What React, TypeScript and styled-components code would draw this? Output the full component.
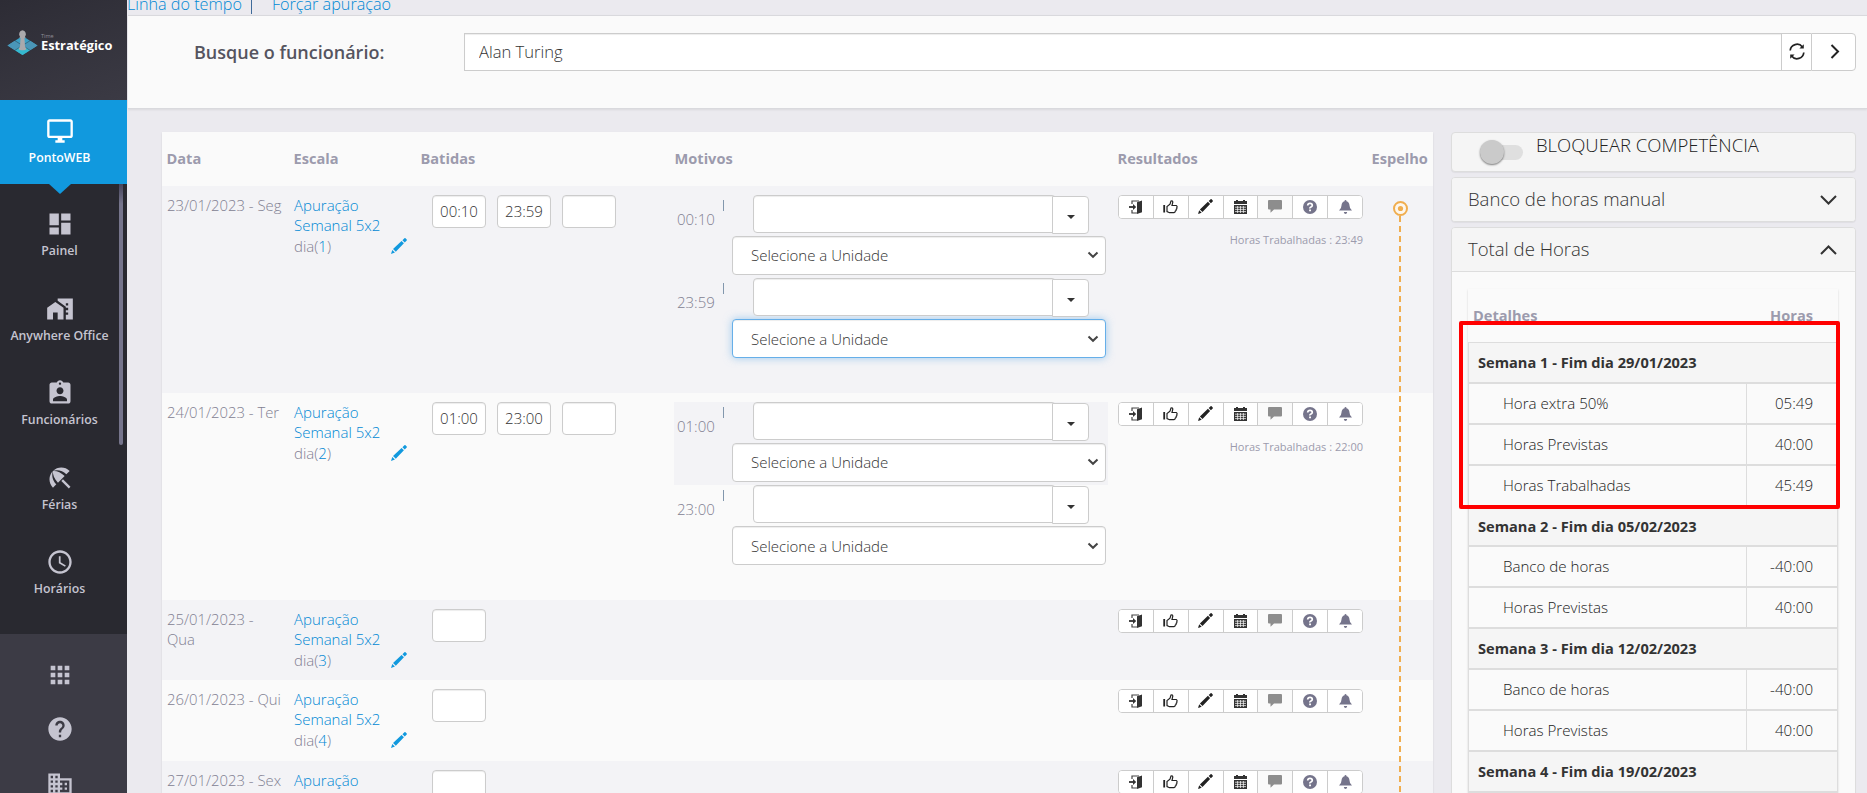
import React from 'react'

import type { IconType } from 'react-icons'
import {
  MdAccessTime,
  MdApps,
  MdAssignmentInd,
  MdBeachAccess,
  MdDashboard,
  MdDomain,
  MdHelp,
  MdHomeWork,
  MdOutlineDesktopWindows,
} from 'react-icons/md'
import styled, { createGlobalStyle, css } from 'styled-components'

const GlobalStyle = createGlobalStyle`
  *, *::before, *::after {
    box-sizing: border-box;
  }

  body {
    margin: 0;
    overflow: hidden;
    background: #ebeaef;
    color: #222;
    font-family: 'Open Sans', 'Liberation Sans', sans-serif;
    font-size: 15px;
    font-weight: 300;
    line-height: 20px;
  }

  input, button {
    font: inherit;
    color: inherit;
  }
`

const colors = {
  primary: '#1199de',
  link: '#0088d4',
  muted: '#9c9bad',
  mutedLight: '#828192',
  border: '#ccc',
  lightBorder: '#ddd',
  stripe: '#f3f3f6',
  surface: '#fafafa',
  accent: '#f0ad4e',
}

const Page = styled.div`
  display: grid;
  grid-template-columns: 127px 1fr;
  height: 793px;
  overflow: hidden;
`

/* ---------- Sidebar ---------- */

const SidebarContainer = styled.aside`
  display: grid;
  grid-template-rows: 100px 84px 450px 1fr;
  min-height: 0;
  overflow: hidden;
  background: #292930;
`

const LogoArea = styled.div`
  display: flex;
  align-items: flex-start;
  padding: 30px 0 0 7px;
  background: linear-gradient(160deg, #2d2c35, #3b3a44);
`

const LogoText = styled.div`
  display: flex;
  flex-direction: column;
  margin: 4px 0 0 3px;
  color: #fff;
  font-size: 12.8px;
  font-weight: 700;
  line-height: 13px;
`

const LogoSmallText = styled.span`
  color: #8f8e98;
  font-size: 5.5px;
  font-weight: 400;
  line-height: 5px;
`

const MenuItem = styled.a`
  display: flex;
  flex: none;
  flex-direction: column;
  align-items: center;
  height: 84.4px;
  padding: 26.4px 8px 0 0;
  color: #c5c4d0;
  font-size: 12.3px;
  font-weight: 600;
  line-height: 18px;
  white-space: nowrap;

  & > svg {
    display: block;
    margin-bottom: 4px;
  }
`

const ActiveMenuItem = styled(MenuItem)`
  position: relative;
  height: 84px;
  padding-top: 17px;
  background: ${colors.primary};
  color: #fff;

  &::after {
    position: absolute;
    top: 100%;
    left: 49px;
    border: 11px solid transparent;
    border-top: 10px solid ${colors.primary};
    border-bottom: 0;
    content: '';
  }
`

const Menu = styled.nav`
  display: flex;
  justify-content: space-between;
  min-height: 0;
  overflow: hidden;
`

const MenuList = styled.div`
  display: flex;
  flex: 1;
  flex-direction: column;
`

const MenuScrollbar = styled.div`
  width: 4px;
  height: 261px;
  margin-right: 4px;
  margin-left: -8px;
  border-radius: 0 0 2px 2px;
  background: linear-gradient(#45445a, #76758c 20px);
`

const BottomMenu = styled.div`
  display: flex;
  flex-direction: column;
  align-items: center;
  gap: 26.5px;
  padding: 26.5px 8px 0 0;
  background: #3c3b45;
  color: #c5c4d0;

  & > svg {
    flex: none;
  }
`

/* ---------- Search bar ---------- */

const Main = styled.main`
  display: flex;
  flex-direction: column;
  min-width: 0;
`

const QuickLinks = styled.div`
  height: 15px;
  overflow: hidden;
  color: ${colors.link};
  font-size: 16.2px;
  line-height: 22px;
  white-space: nowrap;
`

const QuickLinksInner = styled.div`
  display: flex;
  margin-top: -7px;
`

const LinkDivider = styled.span`
  width: 1px;
  height: 22px;
  margin: -1px 20px 0 9px;
  background: #3f6b9a;
`

const SearchBar = styled.section`
  display: grid;
  grid-template-columns: 270px 1fr;
  height: 94px;
  margin-left: 1px;
  padding: 17px 11px 0 66px;
  border-top: 1px solid #d9d9dd;
  border-bottom: 1px solid #d9d9dd;
  background: ${colors.surface};
  box-shadow: 0 1px 2px rgba(0, 0, 0, 0.08);
`

const SearchLabel = styled.label`
  color: #55545f;
  font-size: 18px;
  font-weight: 600;
  line-height: 38px;
`

const SearchGroup = styled.div`
  display: flex;
  height: 38px;
`

const SearchInput = styled.input`
  flex: 1;
  min-width: 0;
  padding: 0 14px;
  border: 1px solid ${colors.border};
  border-right: 0;
  background: #fff;
  box-shadow: inset 0 1px 1px rgba(0, 0, 0, 0.075);
  color: #333;
  font-size: 16.6px;
`

const SearchButton = styled.button<{ $width: number; $last?: boolean }>`
  display: flex;
  align-items: center;
  justify-content: center;
  width: ${(props) => props.$width}px;
  padding: ${(props) => (props.$last ? '0 0 2px 2px' : '0 0 2px')};
  border: 1px solid ${colors.border};
  border-right-width: ${(props) => (props.$last ? 1 : 0)}px;
  border-radius: ${(props) => (props.$last ? '0 4px 4px 0' : '0')};
  background: #fff;
`

/* ---------- Time sheet ---------- */

const Content = styled.div`
  display: grid;
  grid-template-columns: 1271px 405px;
  column-gap: 18px;
  align-items: start;
  padding: 23px 11px 0 35px;
`

const TimeSheetCard = styled.section`
  position: relative;
  background: ${colors.surface};
  box-shadow: 0 1px 2px rgba(0, 0, 0, 0.1);
`

const sheetColumns = css`
  display: grid;
  grid-template-columns: 127px 127px 254px 443px 254px 66px;
`

const SheetHeader = styled.div`
  ${sheetColumns};
  height: 54px;
  padding-top: 16px;
  color: ${colors.muted};
  font-size: 14.6px;
  font-weight: 700;

  & > span {
    padding-left: 4.5px;
  }
`

const SheetRow = styled.div<{ $height: number; $striped: boolean }>`
  ${sheetColumns};
  height: ${(props) => props.$height}px;
  background: ${(props) => (props.$striped ? colors.stripe : colors.surface)};
  color: ${colors.mutedLight};
`

const Cell = styled.div`
  padding: 9px 5px 0;
`

const DateCell = styled(Cell)`
  font-size: 14.85px;
`

const ScheduleLink = styled.a`
  display: block;
  color: ${colors.link};
`

const ScheduleDay = styled.div`
  display: flex;
  align-items: center;
  justify-content: space-between;
  padding: 1px 4px 0 0;

  & > span > b {
    color: ${colors.link};
    font-weight: 300;
  }
`

const PunchList = styled(Cell)`
  display: flex;
  gap: 11px;
  align-items: flex-start;
  padding-left: 16px;
`

const PunchInput = styled.input`
  width: 54px;
  height: 33px;
  padding: 0 0 1px;
  border: 1px solid ${colors.border};
  border-radius: 4px;
  background: #fff;
  box-shadow: inset 0 1px 1px rgba(0, 0, 0, 0.075);
  color: #333;
  text-align: center;
`

const ReasonList = styled(Cell)`
  padding-left: 4px;
`

const Reason = styled.div<{ $striped: boolean }>`
  display: grid;
  grid-template-columns: 58px 374px;
  height: 83.2px;
  background: ${(props) => (props.$striped ? colors.stripe : 'transparent')};
`

const ReasonTime = styled.div`
  display: flex;
  justify-content: space-between;
  padding: 14px 8px 0 3px;
`

const ReasonTick = styled.i`
  width: 1px;
  height: 11px;
  margin-top: -9px;
  background: #8297ad;
`

const Combo = styled.div`
  display: flex;
  padding-left: 21px;
`

const ComboInput = styled.input`
  width: 303px;
  height: 38px;
  border: 1px solid ${colors.border};
  border-radius: 4px;
  background: #fff;
  box-shadow: inset 0 1px 1px rgba(0, 0, 0, 0.075);
`

const ComboButton = styled.button`
  z-index: 1;
  display: flex;
  align-items: center;
  justify-content: center;
  width: 37px;
  height: 38px;
  margin: 1px 0 0 -4px;
  padding: 3px 0 0;
  border: 1px solid ${colors.border};
  border-radius: 0 4px 4px 0;
  background: #fff;
`

const UnitSelect = styled.button<{ $focused: boolean }>`
  display: flex;
  align-items: center;
  justify-content: space-between;
  width: 374px;
  height: 38.4px;
  margin-top: 2.3px;
  padding: 0 6px 0 18px;
  border: 1px solid ${(props) => (props.$focused ? '#66afe9' : colors.border)};
  border-radius: 4px;
  background: #fff;
  box-shadow: inset 0 1px 1px rgba(0, 0, 0, 0.075)
    ${(props) => props.$focused && ', 0 0 8px rgba(102, 175, 233, 0.6)'};
  color: #333;
`

const ActionGroup = styled.div`
  display: flex;
  width: 245px;
  height: 24px;
  overflow: hidden;
  border: 1px solid ${colors.border};
  border-radius: 4px;
  background: #fff;
`

const ActionButton = styled.button<{ $disabled?: boolean }>`
  display: flex;
  flex: 1;
  align-items: center;
  justify-content: center;
  padding: 0 0 1px;
  border: 0;
  background: ${(props) => (props.$disabled ? '#fafafa' : '#fff')};
  color: #333;

  & + & {
    border-left: 1px solid ${colors.border};
  }
`

const WorkedHours = styled.div`
  width: 245px;
  padding-top: 11px;
  color: ${colors.muted};
  font-size: 11px;
  font-weight: 400;
  text-align: right;
`

/* Runs over every row of the last column */
const MirrorTimeline = styled.div`
  position: absolute;
  top: 69px;
  bottom: 0;
  left: 1230px;
  display: flex;
  flex-direction: column;
  align-items: center;
  width: 16px;

  & > svg {
    margin-left: 1px;
  }
`

const MirrorLine = styled.div`
  flex: 1;
  width: 2px;
  background: repeating-linear-gradient(${colors.accent} 0 6px, transparent 6px 10px);
`

/* ---------- Right column ---------- */

const SidePanels = styled.aside`
  display: flex;
  flex-direction: column;
  gap: 5px;
`

const Panel = styled.section`
  border: 1px solid ${colors.lightBorder};
  border-radius: 4px;
  background: ${colors.surface};
  box-shadow: 0 1px 1px rgba(0, 0, 0, 0.05);
`

const LockPanel = styled(Panel)`
  display: flex;
  height: 40px;
  padding-left: 28px;
  background: #f5f5f5;
  font-size: 18.5px;
  line-height: 24px;
`

const Switch = styled.span`
  display: block;
  width: 43px;
  height: 15px;
  margin: 12px 13px 0 0;
  border-radius: 8px;
  background: #dfdfdf;

  &::before {
    display: block;
    width: 24px;
    height: 24px;
    background: #cacaca;
    border-radius: 50%;
    box-shadow: 0 1px 2px rgba(0, 0, 0, 0.5);
    content: '';
    transform: translateY(-5px);
  }
`

const PanelHeading = styled.div`
  display: flex;
  align-items: center;
  justify-content: space-between;
  height: 43px;
  padding: 0 18px 2px 16px;
  border-radius: 3px;
  background: #f5f5f5;
  color: #333;
  font-size: 18.55px;

  & > svg {
    margin-top: 2px;
  }
`

const TotalBody = styled.div`
  position: relative;
  height: 580px;
  padding: 17px 17px 0 16px;
  border-top: 1px solid ${colors.lightBorder};
`

const TotalTable = styled.div`
  box-shadow: 0 1px 2px rgba(0, 0, 0, 0.15);
`

const TotalHeader = styled.div`
  display: flex;
  justify-content: space-between;
  height: 53.2px;
  padding: 16px 25px 0 5px;
  color: ${colors.muted};
  font-size: 14.6px;
  font-weight: 700;
`

const WeekRow = styled.div`
  height: 40.87px;
  padding-left: 9px;
  border: 1px solid ${colors.lightBorder};
  background: #f5f5f5;
  color: #333;
  font-size: 14.62px;
  font-weight: 700;
  line-height: 39px;
`

const HourRow = styled.div`
  display: grid;
  grid-template-columns: 1fr 91px;
  height: 40.87px;
  border: 1px solid ${colors.lightBorder};
  font-size: 15.1px;
  line-height: 39px;

  & > span:first-child {
    padding-left: 34px;
  }

  & > span:last-child {
    padding-right: 24px;
    border-left: 1px solid ${colors.lightBorder};
    text-align: right;
  }
`

/* Marks the totals of the first week */
const Highlight = styled.div`
  position: absolute;
  top: 49px;
  left: 7px;
  width: 381px;
  height: 188px;
  border: 4px solid #f00;
  border-radius: 2px;
`

/* ---------- Icons ---------- */

function LogoMark() {
  return (
    <svg width="31" height="25" viewBox="0 0 31 25">
      <path d="M15.5 6 30.500 15.500 15.500 25 .5 15.500z" fill="#3b9fc4" />
      <path d="m8 10.700 7.500 4.800L8 20.300.5 15.500z" fill="#4a96b8" />
      <path d="m23 10.700 7.500 4.800-7.500 4.800-7.500-4.800z" fill="#4a96b8" />
      <path d="m15.500 15.500 7.500 4.800-7.500 4.700L8 20.300z" fill="#35b9cf" />
      <path d="m8 10.700 15 9.600M23 10.700 8 20.300" stroke="#2f4a5c" strokeWidth=".6" />
      <path
        d="M15.500.3a3.700 3.700 0 0 1 2.400 6.200l.9.800-1.300.8.500 8.400 1.300 2.300c0 2-7.600 2-7.600 0l1.300-2.300.5-8.400-1.300-.8.900-.8A3.700 3.700 0 0 1 15.500.3z"
        fill="#aaa9ac"
      />
    </svg>
  )
}

function ChevronIcon({ up = false }: { up?: boolean }) {
  return (
    <svg width="17" height="10" viewBox="0 0 17 10" fill="none" stroke="#333" strokeWidth="2">
      <path d={up ? 'm1 9 7.500-7.500L16 9' : 'm1 1 7.500 7.500L16 1'} />
    </svg>
  )
}

function SelectArrow() {
  return (
    <svg width="12" height="8" viewBox="0 0 12 8" fill="none" stroke="#444" strokeWidth="2">
      <path d="m1.500 1.500 4.500 4.300 4.500-4.300" />
    </svg>
  )
}

function CaretIcon() {
  return (
    <svg width="8" height="4" viewBox="0 0 8 4">
      <path d="M0 0h8L4 4z" fill="#333" />
    </svg>
  )
}

function SyncIcon() {
  return (
    <svg width="16" height="17" viewBox="0 0 16 17" fill="none" stroke="#222" strokeWidth="1.700">
      <path d="M1.200 7.500A6.800 6.800 0 0 1 13.400 4M14.800 9.500A6.800 6.800 0 0 1 2.600 13" />
      <path d="M14.800 1.200V5.600H10.400zM1.200 15.800v-4.400H5.600z" fill="#222" stroke="none" />
    </svg>
  )
}

function NextIcon() {
  return (
    <svg width="10" height="15" viewBox="0 0 10 15" fill="none" stroke="#222" strokeWidth="2">
      <path d="m1.500 1 6.500 6.500L1.500 14" />
    </svg>
  )
}

function PencilIcon({ color = '#222', size = 15 }: { color?: string; size?: number }) {
  return (
    <svg width={size} height={size} viewBox="0 0 15 15" fill={color}>
      <path d="M0 15l1.200-3.800 2.500 2.500zM1.900 10.400 9.900 2.800l2.200 2.200L4.500 13zM10.700 2l1.900-1.700q.5-.5 1 0L14.700 1.400q.5.500 0 1L12.900 4.200z" />
    </svg>
  )
}

function LoginIcon() {
  return (
    <svg width="14" height="14" viewBox="0 0 14 14" fill="none" stroke="#444" strokeWidth="1.200">
      <path d="M3 4V1h7M3 10v3h5" />
      <path d="M0 7h4.500" strokeWidth="1.800" />
      <path d="M4 4l3.200 3L4 10zM8 2.200 13 .6v11.600L8 14z" fill="#333" stroke="none" />
    </svg>
  )
}

function ThumbIcon() {
  return (
    <svg width="15" height="14" viewBox="0 0 15 14" fill="none" stroke="#222" strokeWidth="1.200">
      <path d="M1.200 5v7.500" strokeWidth="1.800" />
      <path d="M4 11.500v-5L7 4.200 8 1q1.800-.6 1.800 1.200L9 5.500h4.200q1.500 1 .6 2.200.4 1.200-.6 1.700.2 1.200-.9 1.700 0 1.400-1.300 1.600H6.500z" />
    </svg>
  )
}

function CalendarIcon() {
  return (
    <svg width="13" height="14" viewBox="0 0 13 14">
      <path d="M0 1h2V0h2v1h5V0h2v1h2v3H0zM0 5h13v9H0z" fill="#333" />
      <path
        d="M1 7.200h11M1 9.400h11M1 11.600h11M3.600 6v7M6.500 6v7M9.400 6v7"
        fill="none"
        stroke="#fff"
        strokeWidth=".7"
      />
    </svg>
  )
}

function CommentIcon() {
  return (
    <svg width="14" height="13" viewBox="0 0 14 13">
      <path d="M1 0h12q1 0 1 1v7.500q0 1-1 1H6L2.500 12.700V9.500H1q-1 0-1-1V1q0-1 1-1z" fill="#8d8d8d" />
    </svg>
  )
}

function QuestionIcon() {
  return (
    <svg width="14" height="14" viewBox="0 0 14 14">
      <circle cx="7" cy="7" r="7" fill="#75748b" />
      <path d="M4.700 5.500Q4.800 3.400 7 3.400t2.300 1.900Q9.300 6.400 8 7T7 8.600" fill="none" stroke="#fff" strokeWidth="1.700" />
      <path d="M6.100 9.500H8v1.700H6.100z" fill="#fff" />
    </svg>
  )
}

function BellIcon() {
  return (
    <svg width="13" height="14" viewBox="0 0 13 14" fill="#75748b">
      <path d="M6.500 0q1 0 1 1.200Q10.300 2 10.500 5.500q0 3 2.500 5H0q2.500-2 2.500-5Q2.700 2 5.500 1.200 5.500 0 6.500 0zM4.800 12h3.400q-.3 1.900-1.700 1.900T4.800 12z" />
    </svg>
  )
}

function TargetIcon() {
  return (
    <svg width="15" height="15" viewBox="0 0 15 15" fill="none">
      <circle cx="7.500" cy="7.500" r="6.500" fill="#fdf6ec" stroke={colors.accent} strokeWidth="2" />
      <circle cx="7.500" cy="7.500" r="2.600" fill={colors.accent} />
    </svg>
  )
}

/* ---------- Data ---------- */

interface Day {
  date: string
  day: number
  height: number
  punches: string[]
  worked?: string
  focusedReason?: number
}

const days: Day[] = [
  { date: '23/01/2023 - Seg', day: 1, height: 207, punches: ['00:10', '23:59'], worked: '23:49', focusedReason: 1 },
  { date: '24/01/2023 - Ter', day: 2, height: 207, punches: ['01:00', '23:00'], worked: '22:00' },
  { date: '25/01/2023 - Qua', day: 3, height: 80, punches: [] },
  { date: '26/01/2023 - Qui', day: 4, height: 81, punches: [] },
  { date: '27/01/2023 - Sex', day: 5, height: 81, punches: [] },
]

const weeks: { title: string; hours: [string, string][] }[] = [
  {
    title: 'Semana 1 - Fim dia 29/01/2023',
    hours: [
      ['Hora extra 50%', '05:49'],
      ['Horas Previstas', '40:00'],
      ['Horas Trabalhadas', '45:49'],
    ],
  },
  {
    title: 'Semana 2 - Fim dia 05/02/2023',
    hours: [
      ['Banco de horas', '-40:00'],
      ['Horas Previstas', '40:00'],
    ],
  },
  {
    title: 'Semana 3 - Fim dia 12/02/2023',
    hours: [
      ['Banco de horas', '-40:00'],
      ['Horas Previstas', '40:00'],
    ],
  },
  { title: 'Semana 4 - Fim dia 19/02/2023', hours: [['Banco de horas', '-40:00']] },
]

const menuItems: { label: string; icon: IconType; size: number }[] = [
  { label: 'Painel', icon: MdDashboard, size: 28 },
  { label: 'Anywhere Office', icon: MdHomeWork, size: 28 },
  { label: 'Funcionários', icon: MdAssignmentInd, size: 28 },
  { label: 'Férias', icon: MdBeachAccess, size: 28 },
  { label: 'Horários', icon: MdAccessTime, size: 28 },
]

/* ---------- Components ---------- */

function Sidebar() {
  return (
    <SidebarContainer>
      <LogoArea>
        <LogoMark />
        <LogoText>
          <LogoSmallText>Time</LogoSmallText>
          Estratégico
        </LogoText>
      </LogoArea>
      <ActiveMenuItem>
        <MdOutlineDesktopWindows size={28} />
        PontoWEB
      </ActiveMenuItem>
      <Menu>
        <MenuList>
          {menuItems.map(({ label, icon: Icon, size }) => (
            <MenuItem key={label}>
              <Icon size={size} />
              {label}
            </MenuItem>
          ))}
        </MenuList>
        <MenuScrollbar />
      </Menu>
      <BottomMenu>
        <MdApps size={28} />
        <MdHelp size={28} />
        <MdDomain size={28} />
      </BottomMenu>
    </SidebarContainer>
  )
}

function Search() {
  return (
    <SearchBar>
      <SearchLabel htmlFor="employee">Busque o funcionário:</SearchLabel>
      <SearchGroup>
        <SearchInput id="employee" defaultValue="Alan Turing" />
        <SearchButton $width={30}>
          <SyncIcon />
        </SearchButton>
        <SearchButton $width={45} $last>
          <NextIcon />
        </SearchButton>
      </SearchGroup>
    </SearchBar>
  )
}

function Actions() {
  return (
    <ActionGroup>
      <ActionButton>
        <LoginIcon />
      </ActionButton>
      <ActionButton>
        <ThumbIcon />
      </ActionButton>
      <ActionButton>
        <PencilIcon />
      </ActionButton>
      <ActionButton>
        <CalendarIcon />
      </ActionButton>
      <ActionButton $disabled>
        <CommentIcon />
      </ActionButton>
      <ActionButton>
        <QuestionIcon />
      </ActionButton>
      <ActionButton>
        <BellIcon />
      </ActionButton>
    </ActionGroup>
  )
}

function DayRow({ entry, striped }: { entry: Day; striped: boolean }) {
  return (
    <SheetRow $height={entry.height} $striped={striped}>
      <DateCell>{entry.date}</DateCell>
      <Cell>
        <ScheduleLink>
          Apuração
          <br />
          Semanal 5x2
        </ScheduleLink>
        <ScheduleDay>
          <span>
            dia(<b>{entry.day}</b>)
          </span>
          <PencilIcon color={colors.primary} size={16} />
        </ScheduleDay>
      </Cell>
      <PunchList>
        {[...entry.punches, ''].map((punch, i) => (
          <PunchInput key={i} defaultValue={punch} />
        ))}
      </PunchList>
      <ReasonList>
        {entry.punches.map((punch, i) => (
          <Reason key={punch} $striped={i % 2 === 0}>
            <ReasonTime>
              {punch}
              <ReasonTick />
            </ReasonTime>
            <div>
              <Combo>
                <ComboInput />
                <ComboButton>
                  <CaretIcon />
                </ComboButton>
              </Combo>
              <UnitSelect $focused={entry.focusedReason === i}>
                Selecione a Unidade
                <SelectArrow />
              </UnitSelect>
            </div>
          </Reason>
        ))}
      </ReasonList>
      <Cell>
        <Actions />
        {entry.worked && <WorkedHours>Horas Trabalhadas : {entry.worked}</WorkedHours>}
      </Cell>
    </SheetRow>
  )
}

function TimeSheet() {
  return (
    <TimeSheetCard>
      <SheetHeader>
        <span>Data</span>
        <span>Escala</span>
        <span>Batidas</span>
        <span>Motivos</span>
        <span>Resultados</span>
        <span>Espelho</span>
      </SheetHeader>
      {days.map((entry, i) => (
        <DayRow key={entry.date} entry={entry} striped={i % 2 === 0} />
      ))}
      <MirrorTimeline>
        <TargetIcon />
        <MirrorLine />
      </MirrorTimeline>
    </TimeSheetCard>
  )
}

function HoursSummary() {
  return (
    <SidePanels>
      <LockPanel>
        <Switch />
        BLOQUEAR COMPETÊNCIA
      </LockPanel>
      <Panel>
        <PanelHeading>
          Banco de horas manual
          <ChevronIcon />
        </PanelHeading>
      </Panel>
      <Panel>
        <PanelHeading>
          Total de Horas
          <ChevronIcon up />
        </PanelHeading>
        <TotalBody>
          <TotalTable>
            <TotalHeader>
              <span>Detalhes</span>
              <span>Horas</span>
            </TotalHeader>
            {weeks.map((week) => (
              <React.Fragment key={week.title}>
                <WeekRow>{week.title}</WeekRow>
                {week.hours.map(([label, value]) => (
                  <HourRow key={label}>
                    <span>{label}</span>
                    <span>{value}</span>
                  </HourRow>
                ))}
              </React.Fragment>
            ))}
          </TotalTable>
          <Highlight />
        </TotalBody>
      </Panel>
    </SidePanels>
  )
}

export default function App() {
  return (
    <Page>
      <GlobalStyle />
      <Sidebar />
      <Main>
        <QuickLinks>
          <QuickLinksInner>
            <a>Linha do tempo</a>
            <LinkDivider />
            <a>Forçar apuração</a>
          </QuickLinksInner>
        </QuickLinks>
        <Search />
        <Content>
          <TimeSheet />
          <HoursSummary />
        </Content>
      </Main>
    </Page>
  )
}
